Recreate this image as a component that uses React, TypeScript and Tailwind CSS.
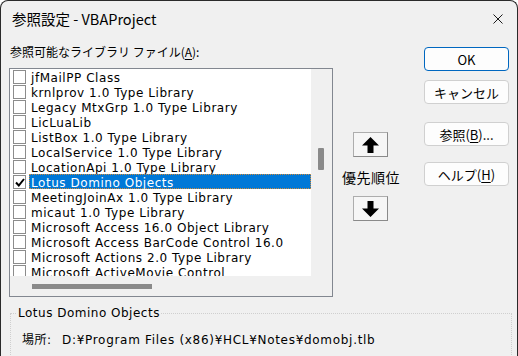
const libraries: { name: string; checked?: boolean; selected?: boolean }[] = [
  { name: 'jfMailPP Class' },
  { name: 'krnlprov 1.0 Type Library' },
  { name: 'Legacy MtxGrp 1.0 Type Library' },
  { name: 'LicLuaLib' },
  { name: 'ListBox 1.0 Type Library' },
  { name: 'LocalService 1.0 Type Library' },
  { name: 'LocationApi 1.0 Type Library' },
  { name: 'Lotus Domino Objects', checked: true, selected: true },
  { name: 'MeetingJoinAx 1.0 Type Library' },
  { name: 'micaut 1.0 Type Library' },
  { name: 'Microsoft Access 16.0 Object Library' },
  { name: 'Microsoft Access BarCode Control 16.0' },
  { name: 'Microsoft Actions 2.0 Type Library' },
  { name: 'Microsoft ActiveMovie Control' },
];

const uiFont = { fontFamily: '"Noto Sans CJK JP", "Noto Sans", sans-serif' };
const listFont = { fontFamily: '"DejaVu Sans", "Noto Sans CJK JP", sans-serif' };

function Arrow({ down = false }: { down?: boolean }) {
  return (
    <svg width="17" height="16" viewBox="0 0 17 16" className={down ? 'rotate-180' : ''}>
      <polygon points="8.5,0 17,8.5 11.5,8.5 11.5,16 5.5,16 5.5,8.5 0,8.5" fill="#000" />
    </svg>
  );
}

function Row({ name, checked, selected }: { name: string; checked?: boolean; selected?: boolean }) {
  return (
    <div className="flex items-start h-[15px] shrink-0">
      <div className="ml-[3px] mt-[1px] w-[13px] h-[14px] border border-[#8c8c8c] bg-white flex items-center justify-center shrink-0">
        {checked && (
          <svg width="10" height="9" viewBox="0 0 10 9">
            <path d="M1 4.5 L3.8 7.5 L9 1" stroke="#000" strokeWidth="2" fill="none" />
          </svg>
        )}
      </div>
      <div
        className={
          selected
            ? 'ml-[3px] flex-1 h-[15px] pl-[1px] bg-[#0078d7] text-white border border-dotted border-[#d08a3a] leading-[16px] whitespace-nowrap'
            : 'ml-[3px] flex-1 h-[15px] pl-[2px] text-black leading-[18px] whitespace-nowrap'
        }
      >
        {name}
      </div>
    </div>
  );
}

export default function App() {
  return (
    <div className="w-[518px] h-[356px] overflow-hidden bg-[#f0f0f0] border-t border-l border-r border-[#2a2a2a] rounded-t-[8px] text-black" style={uiFont}>
      {/* title bar */}
      <div className="h-[36px] flex items-center justify-between pl-[11px] pr-[14px]">
        <span className="text-[14.5px]">参照設定 - VBAProject</span>
        <svg width="10" height="10" viewBox="0 0 10 10">
          <path d="M0.5 0.5 L9.5 9.5 M9.5 0.5 L0.5 9.5" stroke="#1a1a1a" strokeWidth="1" />
        </svg>
      </div>

      <div className="flex">
        {/* left column */}
        <div className="ml-[8px] w-[324px] flex flex-col">
          <div className="mt-[7px] h-[16px] leading-[16px] pl-[1px] text-[12px] whitespace-nowrap">
            参照可能なライブラリ ファイル(<span className="underline underline-offset-2">A</span>):
          </div>
          <div className="mt-[8px] h-[229px] border border-[#828790] flex flex-col" style={listFont}>
            <div className="flex h-[207px]">
              <div className="w-[301px] bg-white overflow-hidden flex flex-col text-[12px] tracking-[0.55px]">
                {libraries.map((lib) => (
                  <Row key={lib.name} {...lib} />
                ))}
              </div>
              <div className="flex-1 bg-[#f0f0f0] flex flex-col items-center">
                <div className="mt-[79px] ml-[-1px] w-[6px] h-[22px] bg-[#8a8a8a] rounded-[1px]" />
              </div>
            </div>
            <div className="flex-1 bg-[#f0f0f0] flex">
              <div className="ml-[22px] mt-[8px] w-[120px] h-[5px] bg-[#8a8a8a]" />
            </div>
          </div>
        </div>

        {/* middle: priority */}
        <div className="w-[91px] flex flex-col items-start">
          <button className="mt-[95px] ml-[20px] w-[35px] h-[25px] bg-[#f6f6f6] border border-[#adadad] border-b-[#8a8a8a] border-r-[#8a8a8a] flex items-center justify-center">
            <Arrow />
          </button>
          <div className="mt-[11px] ml-[9px] h-[18px] leading-[18px] text-[14px] tracking-[0.5px]">優先順位</div>
          <button className="mt-[10px] ml-[20px] w-[35px] h-[25px] bg-[#f6f6f6] border border-[#adadad] border-b-[#8a8a8a] border-r-[#8a8a8a] flex items-center justify-center">
            <Arrow down />
          </button>
        </div>

        {/* right: buttons */}
        <div className="w-[85px] flex flex-col text-[13px]">
          <button className="mt-[10px] h-[24px] rounded-[4px] bg-[#fdfdfd] border border-[#0067c0] leading-none">OK</button>
          <button className="mt-[9px] h-[24px] rounded-[4px] bg-[#fdfdfd] border border-[#d0d0d0] leading-none">キャンセル</button>
          <button className="mt-[18px] h-[24px] rounded-[4px] bg-[#fdfdfd] border border-[#d0d0d0] leading-none">
            参照(<span className="underline underline-offset-2">B</span>)...
          </button>
          <button className="mt-[16px] h-[24px] rounded-[4px] bg-[#fdfdfd] border border-[#d0d0d0] leading-none">
            ヘルプ(<span className="underline underline-offset-2">H</span>)
          </button>
        </div>
      </div>

      {/* reference details */}
      <fieldset className="mt-[8px] ml-[9px] w-[502px] h-[80px] border border-dotted border-[#cfcfcf] px-[6px] text-[12px] tracking-[0.5px]" style={listFont}>
        <legend className="px-[1px] h-[16px] leading-[16px]">Lotus Domino Objects</legend>
        <div className="mt-[11px] pl-[5px] h-[16px] leading-[16px] flex whitespace-nowrap">
          <span className="w-[40px]">場所:</span>
          <span className="tracking-[0.7px]">D:¥Program Files (x86)¥HCL¥Notes¥domobj.tlb</span>
        </div>
      </fieldset>
    </div>
  );
}
